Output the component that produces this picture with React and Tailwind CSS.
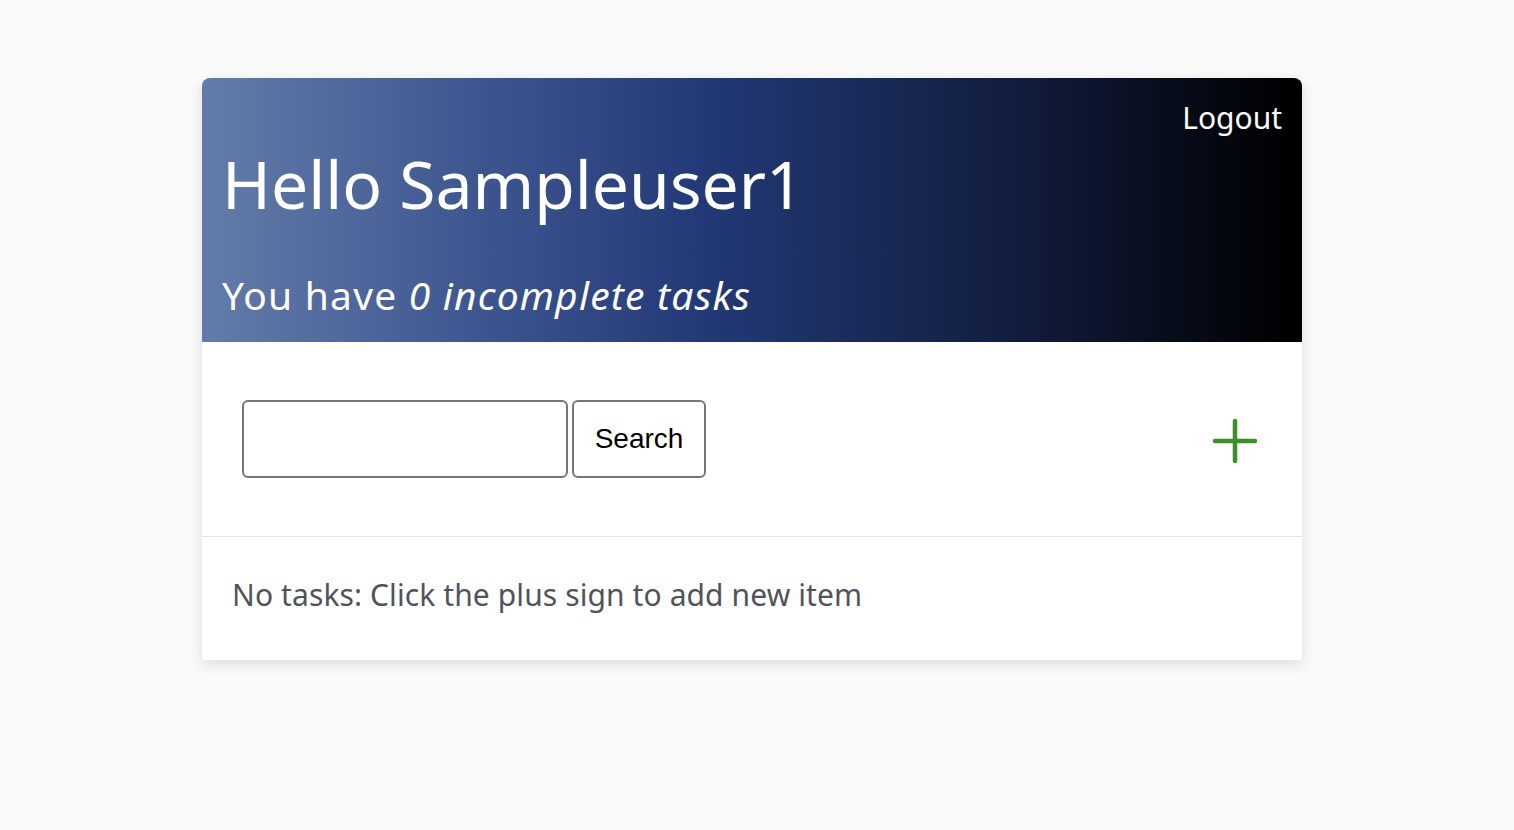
export default function App() {
  return (
    <div className="min-h-screen bg-[#fafafa] pt-[78px] font-['Noto_Sans',sans-serif]">
      <div className="ml-[202px] w-[1100px] bg-white rounded-t-lg shadow-[0_4px_14px_rgba(0,0,0,0.12)]">
        <header className="h-[264px] rounded-t-lg bg-[linear-gradient(90deg,#637ca9_0%,#3e5690_25%,#233a78_45%,#111c3c_75%,#000_99%)] px-5 text-white">
          <div className="flex justify-end pt-[18px]">
            <button className="text-[30px] leading-[44px]">Logout</button>
          </div>
          <h1 className="mt-[3px] text-[66px] leading-[80px]">Hello Sampleuser1</h1>
          <p className="mt-[47px] text-[39px] leading-[50px] tracking-[1.2px]">
            You have <em>0 incomplete tasks</em>
          </p>
        </header>

        <section className="h-[195px] flex items-center justify-between pl-10 pr-[44px] border-b border-[#e1e5ea]">
          <div className="flex items-center gap-1">
            <input
              type="text"
              className="w-[326px] h-[78px] rounded-[6px] border-2 border-[#767676] px-3 text-[24px] outline-none"
            />
            <button className="w-[134px] h-[78px] rounded-[6px] border-2 border-[#767676] bg-white text-[28px] text-black font-['Liberation_Sans',sans-serif]">
              Search
            </button>
          </div>
          <svg width="46" height="46" viewBox="0 0 46 46" className="mt-[4px]">
            <path d="M23 3v40M3 23h40" stroke="#3b8f2b" strokeWidth="4.5" strokeLinecap="round" />
          </svg>
        </section>

        <section className="h-[123px] px-[30px] pt-[38px]">
          <p className="text-[30px] leading-[40px] text-[#4f545b] tracking-[0.1px]">
            No tasks: Click the plus sign to add new item
          </p>
        </section>
      </div>
    </div>
  );
}
